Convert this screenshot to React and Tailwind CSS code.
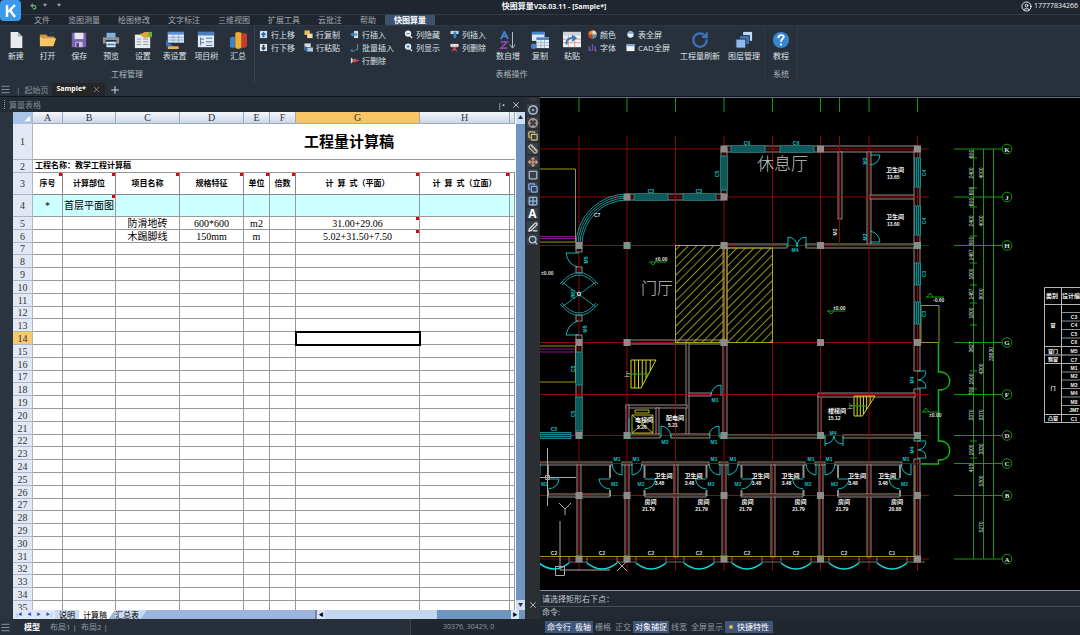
import React, { useState } from 'react';
import { Menu, Plus, X, CircleUser, Undo2, Copy, RotateCw, CircleDot, Crosshair, Search, Move, Ruler, Square, Grid2x2, PenLine } from 'lucide-react';

const menus = ['文件', '览图测量', '绘图修改', '文字标注', '三维视图', '扩展工具', '云批注', '帮助', '快图算量'];

const fileTools = [
  { label: '新建', icon: 'new' },
  { label: '打开', icon: 'open' },
  { label: '保存', icon: 'save' },
  { label: '预览', icon: 'print' },
  { label: '设置', icon: 'setup' },
  { label: '表设置', icon: 'tableSetup' },
  { label: '项目树', icon: 'tree' },
  { label: '汇总', icon: 'sum' },
];

const smallTools = [
  { width: 'w-[45px]', items: [['行上移', 'up'], ['行下移', 'down']] },
  { width: 'w-[46px]', items: [['行复制', 'rowCopy'], ['行粘贴', 'rowPaste']] },
  { width: 'w-[54px]', items: [['行插入', 'rowInsert'], ['批量插入', 'batch'], ['行删除', 'rowDelete']] },
  { width: 'w-[46px]', items: [['列隐藏', 'minus'], ['列显示', 'plus']] },
  { width: 'w-[42px]', items: [['列插入', 'colInsert'], ['列删除', 'colDelete']] },
];

const viewTools = [
  { width: 'w-[38px]', items: [['颜色', 'color'], ['字体', 'font']] },
  { width: 'w-[52px]', items: [['表全屏', 'tableFull'], ['CAD全屏', 'cadFull']] },
];

const icons = {
  new: <><path d="M4 1h8l5 5v13H4z" fill="#e9ecee" /><path d="M12 1v5h5z" fill="#aab2b8" /></>,
  open: <><path d="M1 4h7l2 2h7v4H1z" fill="#cf9541" /><path d="M4 8h15l-3 9H1V6z" fill="#f5c568" /><path d="M11 3q4-3 6 0" stroke="#31506e" fill="none" /></>,
  save: <><path d="M2 2h16v16H2z" fill="#7a63ae" /><path d="M5 2h10v7H5z" fill="#e6e4ef" /><path d="M6 12h8v6H6z" fill="#c9c5df" /><path d="M7 13h3v5H7z" fill="#54418a" /></>,
  print: <><path d="M5 2h10v6H5z" fill="#7fb3dd" /><path d="M1 7h18v7H1z" fill="#8a949c" /><path d="M4 10h12v2H4z" fill="#263442" /><path d="M5 12h10v6H5z" fill="#e8edf2" /><path d="M6 14h8v2H6z" fill="#3585c9" /></>,
  setup: <><path d="M1 4h17v15H1z" fill="#e8ecee" /><path d="M3 9h5M10 9h6M3 12h5M10 12h6M3 15h5M10 15h6" stroke="#8c9aa5" /><path d="M6 4l6-3h7v5l-7 2z" fill="#dca537" /><path d="M16 1h4v6h-4z" fill="#6fae36" /></>,
  tableSetup: <><path d="M2 1h18v12H2z" fill="#dbe6f6" /><path d="M2 1h18v3H2z" fill="#5c8cd3" /><path d="M2 7h18M2 10h18M8 4v9M14 4v9" stroke="#8aa6d0" /><path d="M0 10l8 7H0z" fill="#3a73c0" /><path d="M2 17h12v3H2z" fill="#edb34a" /></>,
  tree: <><path d="M1 1h18v17H1z" fill="#e3eaf5" /><path d="M1 1h18v4H1z" fill="#4b7cbd" /><path d="M4 7v9M4 9h4M4 13h4M10 8h7M10 12h7M10 16h7" stroke="#486a9d" /></>,
  sum: <><path d="M1 8l3-2 3 1v11l-3 1-3-1z" fill="#3e82c5" /><path d="M7 2l3-1 4 1v17l-4 1-3-1z" fill="#efac2e" /><path d="M14 4l3-2 3 2v13l-3 2-3-1z" fill="#c9392f" /></>,
  sort: <><path d="M2 9l4-8 4 8M3 6h6" stroke="#4683d2" strokeWidth="2" fill="none" /><path d="M2 12h7l-7 7h7" stroke="#8b45a5" strokeWidth="2" fill="none" /><path d="M15 1v17M12 15l3 4 3-4" stroke="#c1c9d0" fill="none" /></>,
  copy: <><path d="M1 1h14v10H1z" fill="#dde7f5" /><path d="M1 1h14v3H1z" fill="#4684cf" /><path d="M6 7h14v12H6z" fill="#e7edf5" /><path d="M6 7h14v3H6z" fill="#4684cf" /><path d="M6 13h14M6 16h14M11 10v9M15 10v9" stroke="#a4b3c7" /><circle cx="3" cy="17" r="3" fill="#4684cf" /></>,
  paste: <><path d="M0 1h20v17H0z" fill="#eef1f4" /><path d="M0 1h20v4H0z" fill="#cfd4da" /><path d="M0 9h20M0 13h20M6 5v13M13 5v13" stroke="#d99877" /><path d="M4 15c-1-6 4-8 9-7M10 5l4 3-4 3" stroke="#2c76c4" strokeWidth="2" fill="none" /></>,
  layers: <><path d="M9 1h10v10H9z" fill="#c1d9ef" /><path d="M5 5h11v10H5z" fill="#3d76bd" stroke="#25303b" /><path d="M1 9h11v10H1z" fill="#8db9ef" stroke="#25303b" /></>,
  help: <><circle cx="10" cy="10" r="9" fill="#3686d2" /><path d="M7 8c0-5 7-4 6-1-1 2-3 2-3 5M10 14v2" stroke="#fff" strokeWidth="2" fill="none" /></>,
  up: <><path d="M2 2h16v16H2z" fill="#cfdcea" /><path d="M10 4l6 7h-4v5H8v-5H4z" fill="#2467ad" /></>,
  down: <><path d="M2 2h16v16H2z" fill="#dfe6ee" /><path d="M10 17l6-7h-4V4H8v6H4z" fill="#233e61" /></>,
  rowCopy: <><path d="M1 1h12v10H1z" fill="#e9b95d" /><path d="M7 8h12v10H7z" fill="#f1deb0" /></>,
  rowPaste: <><path d="M1 1h14v8H1z" fill="#d9e0e7" /><path d="M6 10h14v9H6z" fill="#b9c9da" /><path d="M2 6v9h7" stroke="#3282cd" strokeWidth="3" fill="none" /></>,
  rowInsert: <><path d="M9 2h9v16H9z" fill="#d4dfe8" /><path d="M0 10l7-5v3h9v4H7v3z" fill="#3689d1" /></>,
  batch: <><path d="M17 2v13h-5M2 18h9" stroke="#8595a5" strokeWidth="2" fill="none" /><circle cx="4" cy="16" r="3" fill="#2e65a1" /></>,
  rowDelete: <><path d="M2 3l7 7-7 7z" fill="#cdd3db" /><path d="M7 10h12M12 6l-5 4 5 4" stroke="#e2504f" strokeWidth="3" fill="none" /></>,
  minus: <><circle cx="9" cy="8" r="7" fill="#eef1f4" /><path d="M13 13l5 5" stroke="#dce2e8" strokeWidth="3" /><path d="M5 8h8" stroke="#52606e" strokeWidth="2" /></>,
  plus: <><circle cx="9" cy="8" r="7" fill="#eef1f4" /><path d="M13 13l5 5" stroke="#dce2e8" strokeWidth="3" /><path d="M5 8h8M9 4v8" stroke="#2c70bd" strokeWidth="2" /></>,
  colInsert: <><path d="M1 2h18v7H1z" fill="#c8d5e2" /><path d="M8 4h6v14H8z" fill="#3a80c5" /></>,
  colDelete: <><path d="M1 2h18v7H1z" fill="#dbe0e6" /><path d="M5 8l10 10M15 8L5 18" stroke="#d84d4a" strokeWidth="3" /></>,
  color: <><circle cx="10" cy="10" r="9" fill="#e68b42" /><path d="M10 10V1a9 9 0 0 1 9 9z" fill="#eee1cf" /><path d="M10 10h9a9 9 0 0 1-9 9z" fill="#4594ca" /><path d="M10 10H1a9 9 0 0 0 9 9z" fill="#b83e39" /></>,
  font: <><path d="M3 7v9h4M10 3v14M16 7v9" stroke="#6f5ac2" strokeWidth="3" fill="none" /><path d="M14 17h5" stroke="#d1715b" strokeWidth="2" /></>,
  tableFull: <><circle cx="10" cy="10" r="7" fill="#e5edf5" /><path d="M4 5h12v3H4z" fill="#5290cf" /></>,
  cadFull: <><path d="M1 3h18v15H1z" fill="#f0f3f6" /><path d="M1 3h18v4H1z" fill="#68a4dc" /></>,
};

function Icon({ name, className }) {
  return <svg viewBox="0 0 20 20" className={className} aria-hidden="true">{icons[name]}</svg>;
}

function BigButton({ label, icon, className = 'w-8', children }) {
  return (
    <button className={`flex flex-col items-center gap-px shrink-0 whitespace-nowrap ${className}`}>
      {children || <Icon name={icon} className="size-[18px]" />}
      <span className="text-[8px] leading-3">{label}</span>
    </button>
  );
}

function SmallColumn({ width, items }) {
  return (
    <div className={`flex flex-col shrink-0 ${width}`}>
      {items.map(([label, icon]) => (
        <button key={label} className="flex items-center gap-[3px] h-[13px] text-[8px] leading-3 whitespace-nowrap">
          <Icon name={icon} className="size-[9px] shrink-0" />
          {label}
        </button>
      ))}
    </div>
  );
}

function TopBar() {
  return (
    <header className="relative bg-[#20262f] text-[8px] shrink-0">
      <div className="absolute left-0 top-0 size-[21px] rounded bg-[#3c9aed] grid place-items-center">
        <svg viewBox="0 0 20 20" className="size-5" aria-label="K"><path d="M6 4v12M14 4l-7 7M9 9l5 7" stroke="#fff" strokeWidth="2.4" fill="none" /></svg>
      </div>
      <div className="h-[14px] flex items-center pb-0.5">
        <div className="flex-1 flex items-center gap-1.5 pl-[30px] text-gray-400">
          <button aria-label="撤销"><Undo2 className="size-[7px] text-[#69b86a]" strokeWidth={4} /></button>
          <span className="text-[4px]">▼</span>
          <span className="text-[4px] pl-1">▼</span>
        </div>
        <h1 className="font-bold text-gray-100 leading-3">快图算量<span className="text-[7px]">V26.03.11 - [Sample*]</span></h1>
        <div className="flex-1 flex items-center justify-end gap-0.5 pr-0.5 text-[7px] text-gray-100">
          <CircleUser className="size-[11px]" /> 17777834266
        </div>
      </div>
      <nav className="h-[11px] border-t border-[#333b45] pl-[25px] flex text-[#a3abb3]">
        {menus.map((m) => (
          <button key={m} className={m === '快图算量' ? 'px-[9px] leading-[10px] bg-[#40516d] text-white font-bold' : 'px-[9px] leading-[10px]'}>{m}</button>
        ))}
      </nav>
    </header>
  );
}

function Ribbon() {
  return (
    <section className="h-[58px] shrink-0 flex bg-[#27303b] text-[#dde2e6] border-t border-[#2f3843] overflow-hidden">
      <div className="w-[255px] shrink-0 flex flex-col justify-between border-r border-[#3a424c] pt-[5px]">
        <div className="flex">
          {fileTools.map((t) => <BigButton key={t.label} {...t} className="flex-1" />)}
        </div>
        <div className="text-[8px] leading-3 text-center text-[#b0b7be] pb-[3px]">工程管理</div>
      </div>
      <div className="w-[510px] shrink-0 flex flex-col justify-between border-r border-[#303944] pt-0.5 pl-1">
        <div className="h-10 flex">
          {smallTools.map((c) => <SmallColumn key={c.items[0][0]} {...c} />)}
          <BigButton label="数自增" icon="sort" className="w-8 pt-[3px]" />
          <BigButton label="复制" icon="copy" className="w-8 pt-[3px]" />
          <BigButton label="粘贴" icon="paste" className="w-8 pt-[3px]" />
          {viewTools.map((c) => <SmallColumn key={c.items[0][0]} {...c} />)}
          <BigButton label="工程量刷新" className="w-11 pt-[3px]"><RotateCw className="size-[18px] text-[#3d72bd]" strokeWidth={3} /></BigButton>
          <BigButton label="图层管理" icon="layers" className="w-11 pt-[3px]" />
        </div>
        <div className="text-[8px] leading-3 text-center text-[#b0b7be] pb-[3px]">表格操作</div>
      </div>
      <div className="w-[33px] shrink-0 flex flex-col items-center justify-between border-r border-[#303944] pt-[5px]">
        <BigButton label="教程" icon="help" />
        <div className="text-[8px] leading-3 text-[#b0b7be] pb-[3px]">系统</div>
      </div>
    </section>
  );
}

function DocTabs() {
  return (
    <nav className="h-[14px] shrink-0 flex items-center bg-[#27303b] border-b border-[#10151b] text-[8px] text-[#8b949c]">
      <button aria-label="菜单" className="w-4"><Menu className="size-[11px]" /></button>
      <span>|</span>
      <button className="px-1">起始页</button>
      <button className="h-full px-1 flex items-center gap-1.5 bg-[#262626] text-[7px] text-white font-bold">
        Sample* <X className="size-[9px] text-gray-400" />
      </button>
      <button aria-label="新建标签" className="ml-1 text-gray-300"><Plus className="size-3" /></button>
    </nav>
  );
}

const columns = [
  ['A', 'w-[30px]'], ['B', 'w-[53px]'], ['C', 'w-[64px]'], ['D', 'w-[64px]'], ['E', 'w-[26px]'],
  ['F', 'w-[26px]'], ['G', 'w-[124px]'], ['H', 'w-[90px]'], ['', 'w-[5px]'],
];
const heads = ['序号', '计算部位', '项目名称', '规格特征', '单位', '倍数', '计  算  式（平面）', '计  算  式（立面）', ''];
const records = {
  4: ['*', '首层平面图', '', '', '', '', '', '', ''],
  5: ['', '', '防滑地砖', '600*600', 'm2', '', '31.00+29.06', '', ''],
  6: ['', '', '木踢脚线', '150mm', 'm', '', '5.02+31.50+7.50', '', ''],
};
const notes = ['4-1', '5-6', '6-6'];

function Note() {
  return <span className="absolute right-0 top-0 size-[3px] bg-red-600" />;
}

function RowHead({ n, active }) {
  return (
    <th className={`border-b border-r border-[#a9b7c9] font-normal text-[10px] leading-[11px] text-[#333] p-0 ${active ? 'bg-[#f8c873]' : 'bg-[#e2e9f5]'}`}>{n}</th>
  );
}

function Sheet() {
  const [active, setActive] = useState([14, 6]);
  const rows = Array.from({ length: 32 }, (_, i) => i + 4);
  return (
    <table className="table-fixed border-separate border-spacing-0 w-[502px] bg-white text-black font-['Liberation_Serif','Noto_Sans_CJK_SC',serif]">
      <thead>
        <tr className="h-3 text-[10px] leading-[11px] text-[#333]">
          <th className="w-5 bg-[#a9c4e9] p-0 border-r border-[#a9b7c9]">
            <svg viewBox="0 0 10 10" className="size-2 ml-auto mr-px"><path d="M9 2v7H2z" fill="#fff" /></svg>
          </th>
          {columns.map(([c, w], i) => (
            <th key={i} className={`${w} p-0 font-normal border-r border-b border-[#9aaabd] ${c === 'G' ? 'bg-[#f7c566]' : 'bg-linear-to-b from-[#f3f6fb] to-[#cdd7e7]'}`}>{c}</th>
          ))}
        </tr>
      </thead>
      <tbody>
        <tr className="h-9">
          <RowHead n={1} />
          <td colSpan={9} className="border-b border-[#999] p-0 pl-[150px] text-center text-[15px] leading-5 font-bold">工程量计算稿</td>
        </tr>
        <tr className="h-[13px]">
          <RowHead n={2} />
          <td colSpan={9} className="border-b border-[#999] p-0 pl-0.5 text-[8px] leading-3 font-bold">工程名称：教学工程计算稿</td>
        </tr>
        <tr className="h-[22px]">
          <RowHead n={3} />
          {heads.map((h, i) => (
            <th key={i} className="relative p-0 border-b border-r border-[#888] text-[8px] whitespace-pre overflow-hidden">{h}{h && <Note />}</th>
          ))}
        </tr>
        {rows.map((n) => (
          <tr key={n} className={n === 4 ? 'h-[22px] bg-[#ccffff]' : n % 5 === 2 ? 'h-3' : 'h-[13px]'}>
            <RowHead n={n} active={n === active[0]} />
            {columns.map((c, i) => (
              <td
                key={i}
                onClick={() => setActive([n, i])}
                className={`relative p-0 border-b border-r border-[#999] text-center text-[10px] leading-[11px] whitespace-nowrap ${n === active[0] && i === active[1] ? 'z-10 outline-2 -outline-offset-1 outline-black' : ''}`}
              >
                {records[n]?.[i]}
                {notes.includes(`${n}-${i}`) && <Note />}
              </td>
            ))}
          </tr>
        ))}
      </tbody>
    </table>
  );
}

function SheetPanel() {
  return (
    <section className="w-[525px] shrink-0 flex flex-col bg-[#2b3540]">
      <div className="h-[15px] shrink-0 flex items-center justify-between pl-1 pr-1 text-[8px] text-[#7f8992] bg-[#242c36]">
        <span className="border-l border-dotted border-gray-400 pl-1 leading-[9px]">算量表格</span>
        <span className="flex items-center gap-1.5 text-gray-300">
          <button aria-label="固定" className="leading-none">|•</button>
          <button aria-label="关闭"><X className="size-[10px]" /></button>
        </span>
      </div>
      <div className="flex-1 min-h-0 ml-[13px] flex">
        <div className="flex-1 min-w-0 overflow-hidden bg-white"><Sheet /></div>
        <div className="w-[9px] shrink-0 bg-[#7095c1] flex flex-col justify-between text-[5px] text-[#234]">
          <button aria-label="向上" className="h-3 bg-[#cfe0f5]">▲</button>
          <button aria-label="向下" className="h-2.5 bg-[#cfe0f5]">▼</button>
        </div>
      </div>
      <div className="h-[9px] shrink-0 ml-[13px] flex bg-[#9bb5dc] text-[8px] leading-[9px] text-black overflow-hidden">
        <div className="w-[42px] flex items-center justify-around text-[4px] text-[#2949b5] bg-[#dbe6f7]">
          <button>|◀</button><button>◀</button><button>▶</button><button>▶|</button>
        </div>
        <button className="px-1 bg-[#c9d9f0]">说明</button>
        <button className="pl-1 pr-2 bg-white [clip-path:polygon(0_0,100%_0,82%_100%,0_100%)]">计算稿</button>
        <button className="pr-2 bg-[#c9d9f0] [clip-path:polygon(0_0,100%_0,80%_100%,0_100%)]">汇总表</button>
        <div className="flex-1" />
        <div className="w-[210px] flex text-[5px] bg-[#7095c1] border-l-2 border-[#7388a8]">
          <button aria-label="向左" className="w-2 bg-[#d6e4f6]">◀</button>
          <div className="flex-1"><div className="w-3/5 h-full bg-[#c3d7f1]" /></div>
          <button aria-label="向右" className="w-2 mr-1.5 bg-[#d6e4f6]">▶</button>
        </div>
      </div>
    </section>
  );
}

const sideTools = [
  [CircleDot, '#c9d1d9'], [Crosshair, '#cba394'], [Copy, '#dbbd68'], [Ruler, '#c9c19d'], [Move, '#dc9b7c'], [Square, '#aeb7c0'],
  [Copy, '#8baff0'], [Grid2x2, '#94b9e0'], [null, '#ffffff'], [PenLine, '#dfe5ec'], [Search, '#c2cad2'],
];

function SideTools() {
  return (
    <aside className="w-[15px] shrink-0 bg-[#2b2e33] flex flex-col items-center gap-0.5">
      <span className="text-[5px] leading-[5px] text-gray-500">:::::</span>
      {sideTools.map(([Tool, color], i) => (
        <button key={i} aria-label={`工具${i + 1}`} className="size-[11px] grid place-items-center bg-[#36414d]" style={{ color }}>
          {Tool ? <Tool className="size-[10px]" strokeWidth={3} /> : <b className="text-[12px] leading-[11px]">A</b>}
        </button>
      ))}
    </aside>
  );
}

/* ---- floor plan ---- */

const gx = [579, 627, 675.5, 724, 772.5, 820.5, 869, 917.5];
const axes = [['K', 149], ['J', 197], ['H', 245.5], ['G', 342.5], ['F', 394.5], ['D', 435.5], ['C', 463.5], ['B', 495.5], ['A', 559]];
const pillars = [
  [724, 149], [820.5, 149], [917.5, 149], [627, 197], [724, 197], [579, 245.5], [627, 245.5], [724, 245.5], [820.5, 245.5], [917.5, 245.5],
  [579, 342.5], [627, 342.5], [724, 342.5], [820.5, 342.5], [917.5, 342.5], [579, 435.5], [627, 435.5], [724, 435.5], [820.5, 435.5], [917.5, 435.5],
  [579, 495.5], [627, 495.5], [724, 495.5], [820.5, 495.5], [917.5, 495.5], [579, 559], [627, 559], [724, 559], [820.5, 559], [917.5, 559],
];
// x, y, w, h
const walls = [
  [724, 146, 194, 6], [721, 149, 6, 48], [627, 194, 97, 6], [838, 152, 4, 67], [867, 152, 4, 92], [870, 195, 45, 4],
  [727, 244, 60, 4], [806, 244, 109, 4], [914, 149, 6, 222], [914, 389, 6, 52], [576, 247, 6, 5], [576, 267, 6, 6], [576, 315, 6, 6], [576, 335, 6, 100],
  [723, 248, 4, 188], [627, 340, 97, 4], [686, 343, 3, 93], [689, 393, 22, 3], [626, 405, 61, 3], [626, 405, 3, 31],
  [656, 408, 3, 27], [629, 434, 31, 4], [671, 434, 39, 4], [720, 435, 105, 3], [843, 435, 72, 3], [818, 394, 3, 42], [818, 393, 97, 4],
  [540, 462, 72, 3], [622, 462, 10, 3], [642, 462, 67, 3], [719, 462, 9, 3], [738, 462, 67, 3], [815, 462, 10, 3], [835, 462, 67, 3], [914, 459, 6, 103],
  [577, 465, 4, 92], [625, 465, 4, 92], [674, 465, 4, 92], [722, 465, 4, 92], [771, 465, 4, 92], [819, 465, 4, 92], [867, 465, 4, 92],
  [548, 494, 62, 3], [645, 494, 61, 3], [741, 494, 62, 3], [838, 494, 62, 3],
];
const winH = [[731, 149, 34], [780, 149, 34], [634, 197, 34], [683, 197, 33], [540, 435.5, 31]];
const winV = [[724, 156, 34], [917.5, 158, 29], [917.5, 206, 29], [917.5, 263, 22], [917.5, 302, 22], [579, 352, 33], [579, 397, 34]];
const marks = [
  ['C6', 747, 145], ['C6', 796, 145], ['C5', 651, 193], ['C5', 699, 193], ['C5', 554, 431], ['M4', 795, 252], ['M3', 665, 444], ['M1', 714, 444],
  ['M1', 715, 402], ['M4', 833, 435], ['M1', 617, 461], ['M1', 636, 461], ['M1', 714, 461], ['M1', 733, 461], ['M1', 811, 461], ['M1', 829, 461], ['M1', 906, 461],
];
const sideMarks = [
  ['C5', 719, 174], ['C4', 926, 173], ['C4', 926, 221], ['C3', 926, 274], ['C3', 926, 314], ['M2', 867, 161], ['M2', 867, 237], ['M5', 588, 260], ['JM7', 575, 294],
  ['M5', 587, 329], ['C5', 575, 369], ['C5', 575, 414], ['M4', 914, 380], ['M4', 914, 450],
];
const dims1 = [['600', 154], ['2400', 173], ['600', 191], ['600', 202], ['2400', 221], ['900', 241], ['1467', 255], ['1800', 274], ['1467', 294], ['1800', 313], ['3627', 347], ['1500', 379], ['700', 391], ['3370', 415], ['1500', 450], ['415', 468]];
const dims2 = [['4000', 173], ['4000', 221], ['8000', 294], ['4300', 369], ['3370', 415], ['3330', 449], ['5300', 481], ['5270', 527]];
const ticks = [158, 188, 207, 236, 263, 285, 303, 325, 371, 389, 441, 458];
const schedule = [['C3', 317], ['C4', 325], ['C5', 333.5], ['C6', 342], ['M5', 351], ['C7', 359.5], ['M1', 368], ['M2', 376], ['M3', 384.5], ['M4', 393], ['M8', 401.5], ['JM7', 410], ['C1', 418.5]];
const baths = [[579, false], [675.5, true], [772.5, true], [869, true]];

function Upright({ x, y, children }) {
  return <text x={x} y={y} transform={`rotate(-90 ${x} ${y})`} textAnchor="middle">{children}</text>;
}

function Level({ x, y, text }) {
  return (
    <g>
      <path d={`M${x} ${y}h18M${x + 1} ${y}l3 3 3-3`} stroke="#129b12" fill="none" />
      <text x={x + 6} y={y - 1} fill="#ddd" fontSize="5" fontWeight="bold">{text}</text>
    </g>
  );
}

function Stairs({ x, y, w, h }) {
  return (
    <g stroke="#d6d61a" fill="none">
      <path d={`M${x} ${y}h${w}l${-w * 0.6} ${h}h${-w * 0.4}z`} />
      {[0.15, 0.3, 0.45].map((t) => <path key={t} d={`M${x + w * t} ${y}v${t > 0.4 ? h * 0.9 : h}`} />)}
      <path d={`M${x + w * 0.6} ${y}v${h * 0.65}M${x + w * 0.77} ${y}v${h * 0.38}`} />
      <path d={`M${x - 3} ${y + h / 2}h${w - 5}`} stroke="#18b518" />
      <text x={x - 7} y={y + h / 2 + 2} fontSize="6" fill="#ccc" stroke="none">上</text>
    </g>
  );
}

function FloorPlan() {
  return (
    <svg viewBox="540 98 540 491" preserveAspectRatio="xMinYMin meet" className="size-full bg-black font-['Liberation_Sans','Noto_Sans_CJK_SC',sans-serif]" role="img" aria-label="首层平面图">
      <defs>
        <pattern id="hatch" width="6" height="6" patternUnits="userSpaceOnUse" patternTransform="rotate(45)">
          <path d="M0 0v6" stroke="#b4b41e" strokeWidth="1.6" />
        </pattern>
      </defs>

      <g fill="#1a0505" stroke="#9a9a9a" strokeWidth="0.9">
        {walls.map(([x, y, w, h], i) => <rect key={i} x={x} y={y} width={w} height={h} />)}
      </g>

      <g stroke="#a00808" strokeWidth="0.9">
        {gx.map((x) => <path key={x} d={`M${x} 136V571`} />)}
        <path d="M839.5 136V245" />
        {axes.map(([a, y]) => <path key={a} d={`M540 ${y}H929`} />)}
      </g>
      <g stroke="#109a10">
        {[...gx, 839.5].map((x) => <path key={x} d={`M${x} 97v15`} />)}
      </g>

      <g stroke="#a8a81e">
        <rect x="675.5" y="245.5" width="48.5" height="97" fill="url(#hatch)" />
        <rect x="727" y="248" width="45.5" height="94.5" fill="url(#hatch)" />
        <path d="M540 169h35.5v73H540M540 346h35.5v36H540M540 556.5h375V465M921 305.5h18v37h-18z" fill="none" strokeWidth="0.9" />
      </g>

      <g fill="#052a2a" stroke="#18a3a6" strokeWidth="0.8">
        {winH.map(([x, y, w]) => <g key={`${x}-${y}`}><rect x={x} y={y - 3} width={w} height="6" /><path d={`M${x} ${y - 1}h${w}M${x} ${y + 1}h${w}`} /></g>)}
        {winV.map(([x, y, h]) => <g key={`${x}-${y}`}><rect x={x - 3} y={y} width="6" height={h} /><path d={`M${x - 1} ${y}v${h}M${x + 1} ${y}v${h}`} /></g>)}
      </g>
      <g fill="none" stroke="#18a3a6" strokeWidth="0.9">
        {[45, 47, 49, 51].map((r) => <path key={r} d={`M${627 - r} 245A${r} ${r} 0 0 1 627 ${245 - r}`} />)}
        <path d="M560 284Q579 261 598 284M562 285Q579 265 596 285M560 304Q579 327 598 304M562 303Q579 323 596 303M562 282L596 307M596 282L562 307" />
      </g>
      <circle cx="579" cy="294" r="1.8" fill="none" stroke="#ddd" />

      {/* doors */}
      <g fill="none" stroke="#18c9cc" strokeWidth="0.9">
        <path d="M579 253h-13q2 12 12 14M579 335h-13q2-11 12-14" />
        <path d="M788 247v-10q9 1 9 10q0-9 9-10v10" />
        <path d="M870 155h10q-1 9-10 10M870 242h10q-1-9-10-11" />
        <path d="M917 371h9M917 388h9M926 372q-1 7-8 8q8 0 8 8M917 441h9M917 458h9M926 442q-1 7-8 8q8 0 8 8" />
        <path d="M825 436v10M843 436v10M825 444q8-1 9-8q1 8 9 8" />
        <path d="M721 396v-11q-9 1-10 10M719 437v-11q-9 1-10 10M661 437v-11q9 1 10 11" />
        <path d="M622 464v11q-9-1-10-11M632 464v11q9-1 10-11M720 464v11q-10-1-11-11M728 464v11q9-1 10-11M816 464v11q-9-1-10-11M825 464v11q9-1 10-11M911 464v11q-9-1-10-11M540 464v11M629 418v14" />
      </g>

      {/* bay windows */}
      {[554, 602, 651, 699, 747, 796, 844, 892].map((x, i) => (
        <g key={x} fill="none">
          <path d={`M${x - 15} 563q15 12 30 0`} stroke="#10dfe2" strokeWidth="1.5" />
          <path d={`M${x - 15} 557v6M${x + 15} 557v6M${x + 15} 562h18`} stroke="#888" strokeWidth="0.8" />
          <text x={x} y="555" fontSize="5" fill="#ddd" fontWeight="bold" textAnchor="middle">{i === 7 ? 'C1' : 'C2'}</text>
        </g>
      ))}

      {/* bathrooms and bedrooms */}
      {baths.map(([x, named]) => (
        <g key={x}>
          <path d={`M${x - 31} 465v13M${x + 31} 465v13M${x - 31} 490v6M${x + 31} 490v6`} stroke="#8d8d8d" strokeWidth="2" />
          <path d={`M${x - 31} 479h11q-1 9-11 10M${x + 31} 479h-11q1 9 11 10`} stroke="#18c9cc" fill="none" strokeWidth="0.9" />
          <g fill="#12b9bc" fontSize="5" fontWeight="bold"><text x={x - 38} y="486">M2</text><text x={x + 32} y="486">M2</text></g>
          {named && (
            <g fill="#f2f2f2" fontSize="6" fontWeight="bold" textAnchor="middle">
              <text x={x - 12} y="478">卫生间</text><text x={x - 16} y="485" fontSize="5">3.48</text>
              <text x={x + 18} y="478">卫生间</text><text x={x + 14} y="485" fontSize="5">3.48</text>
              <text x={x - 25} y="504">房间</text><text x={x - 27} y="511" fontSize="5">21.79</text>
              <text x={x + 28} y="504">房间</text><text x={x + 26} y="511" fontSize="5">{x === 869 ? '20.88' : '21.79'}</text>
            </g>
          )}
        </g>
      ))}

      <path d="M540 236.5h35M540 238.5h35M540 349h35M540 352h35" stroke="#a014a0" strokeWidth="0.9" />

      <Stairs x={631} y={360} w={25} h={28} />
      <Stairs x={854} y={396} w={21} h={20} />
      <path d="M632 415h21v18h-21zM635 410h14v3h-14zM632 415l21 18M653 415l-21 18" stroke="#b7b71b" fill="none" />

      <path d="M938.5 342v30h3c11 2 11 16 0 18h-3v51h3c11 2 11 17 0 19h-3v4H921" stroke="#14b814" strokeWidth="1.5" fill="none" />

      <g fill="#8c8c8c">
        {pillars.map(([x, y]) => <rect key={`${x}-${y}`} x={x - 3.5} y={y - 3.5} width="7" height="7" />)}
      </g>

      <g fill="#12c4c7" fontSize="5" fontWeight="bold" textAnchor="middle">
        {marks.map(([t, x, y]) => <text key={`${x}-${y}`} x={x} y={y}>{t}</text>)}
        {sideMarks.map(([t, x, y]) => <Upright key={`${x}-${y}`} x={x} y={y}>{t}</Upright>)}
      </g>
      <g fill="#ddd" fontSize="5" fontWeight="bold">
        <Upright x={837} y={232}>M3</Upright>
        <text x="594" y="217">C7</text>
        <text x="541" y="275">±0.00</text>
      </g>

      <g fill="#c4c4c4" fontWeight="300">
        <text x="757" y="170" fontSize="17">休息厅</text>
        <text x="641" y="294" fontSize="16">门厅</text>
      </g>
      <g fill="#f2f2f2" fontSize="6" fontWeight="bold">
        <text x="886" y="172">卫生间</text><text x="887" y="179" fontSize="5">13.65</text>
        <text x="886" y="219">卫生间</text><text x="887" y="226" fontSize="5">13.60</text>
        <text x="828" y="413">楼梯间</text><text x="828" y="420" fontSize="5">15.12</text>
        <text x="635" y="422">电梯间</text><text x="637" y="429" fontSize="5">5.26</text>
        <text x="666" y="420">配电间</text><text x="668" y="427" fontSize="5">5.21</text>
      </g>
      <Level x={649} y={262} text="±0.00" />
      <Level x={827} y={311} text="±0.00" />
      <g stroke="#129b12" fill="none"><path d="M926 297h18M927 297l3-4 3 4M922 412h18M923 412l3-4 3 4" /></g>
      <g fill="#ddd" fontSize="5" fontWeight="bold"><text x="933" y="302">-0.60</text><text x="929" y="417">±0.00</text></g>

      {/* dimensions */}
      <g stroke="#109a10" fill="none">
        <path d="M973.5 149V559M983.5 149V559M993.5 149V559" />
        {axes.map(([a, y]) => <g key={a}><path d={`M954 ${y}h48`} /><circle cx="1007" cy={y} r="4.8" /></g>)}
        {ticks.map((y) => <path key={y} d={`M970 ${y}h7`} />)}
      </g>
      <g fill="#e2e2e2" fontSize="5">
        {axes.map(([a, y]) => <text key={a} x="1007" y={y + 2.5} fontSize="7" fontFamily="Liberation Serif" fontWeight="bold" textAnchor="middle">{a}</text>)}
        {dims1.map(([t, y]) => <Upright key={y} x={972.5} y={y}>{t}</Upright>)}
        {dims2.map(([t, y]) => <Upright key={y} x={982.5} y={y}>{t}</Upright>)}
        <Upright x={992.5} y={354}>33630</Upright>
      </g>

      {/* door and window schedule */}
      <g stroke="#b5b5b5" fill="none">
        <path d="M1080 287.5h-35.5v135H1080M1061.5 287v135M1044 304.5h36M1044 346.5h36M1044 355h36M1044 363.5h36M1044 414.5h36" />
        <path d="M1062 312.5h18M1062 321h18M1062 329.5h18M1062 338h18M1062 372h18M1062 380h18M1062 388.5h18M1062 397h18M1062 405.5h18" strokeWidth="0.8" />
      </g>
      <g fill="#f0f0f0" fontSize="5" fontWeight="bold" textAnchor="middle">
        <text x="1052" y="298" fontSize="6">类别</text><text x="1062" y="298" fontSize="6" textAnchor="start">设计编</text>
        <text x="1053" y="327">窗</text><text x="1053" y="353">窗门</text><text x="1053" y="361">飘窗</text><text x="1053" y="390">门</text><text x="1053" y="420">凸窗</text>
        {schedule.map(([t, y]) => <text key={y} x="1074" y={y + 2}>{t}</text>)}
      </g>

      {/* UCS mark and cursor */}
      <g stroke="#aaa" fill="none">
        <path d="M560 521v49h50M555.5 566.5h9v9h-9zM617 561l10 10M627 561l-10 10M559 503l6 6 6-6M565 509v6M547.5 448v58M540 477.5h36M545.5 475.5h4v4h-4z" />
      </g>
    </svg>
  );
}

function CommandLine() {
  return (
    <div className="h-[29px] shrink-0 flex bg-[#222932] text-[8px] text-[#c3cad0]">
      <button aria-label="关闭命令行" className="w-[15px] grid place-items-center bg-[#2b2e33]"><X className="size-[10px]" /></button>
      <div className="flex-1 flex flex-col border-t border-[#8b8f94]">
        <div className="flex-1 flex items-center pl-0.5 leading-3">请选择矩形右下点：</div>
        <label className="h-[13px] flex items-start gap-1 pl-0.5 leading-[9px] border-t border-[#474f58]">
          命令:
          <input className="flex-1 h-[9px] bg-transparent outline-none" />
        </label>
      </div>
    </div>
  );
}

const modes = [['命令行', true], ['极轴', true], ['栅格', false], ['正交', false], ['对象捕捉', true], ['线宽', false], ['全屏显示', false]];

function StatusBar() {
  return (
    <footer className="h-4 shrink-0 flex items-center bg-[#20272f] text-[8px] leading-3 text-[#929ba4]">
      <div className="w-[411px] h-full flex items-center bg-[#27303a] border-r border-[#3a424b]">
        <button aria-label="布局菜单" className="w-6"><Menu className="size-[11px]" /></button>
        <button className="text-white font-bold">模型</button>
        <button className="pl-2.5">布局1</button><span className="pl-0.5 pr-1">|</span>
        <button>布局2</button><span className="px-0.5">|</span>
      </div>
      <div className="w-[134px] pl-8 text-[7px]">30376, 30429, 0</div>
      <div className="flex">
        {modes.map(([m, on]) => (
          <button key={m} className={on ? 'px-0.5 bg-[#41557a] text-white' : 'px-0.5'}>{m}</button>
        ))}
        <button className="flex items-center gap-1 px-1 bg-[#41557a] text-white"><span className="size-1 rounded-full bg-[#f0b24e]" />快捷特性</button>
      </div>
    </footer>
  );
}

export default function App() {
  return (
    <div className="h-screen flex flex-col overflow-hidden bg-[#20262f] font-['Open_Sans','Noto_Sans_CJK_SC',sans-serif]">
      <TopBar />
      <Ribbon />
      <DocTabs />
      <main className="flex-1 min-h-0 flex">
        <SheetPanel />
        <section className="flex-1 min-w-0 flex flex-col">
          <div className="flex-1 min-h-0 flex">
            <SideTools />
            <div className="flex-1 min-w-0 bg-black border-t border-gray-500"><FloorPlan /></div>
          </div>
          <CommandLine />
        </section>
      </main>
      <StatusBar />
    </div>
  );
}
